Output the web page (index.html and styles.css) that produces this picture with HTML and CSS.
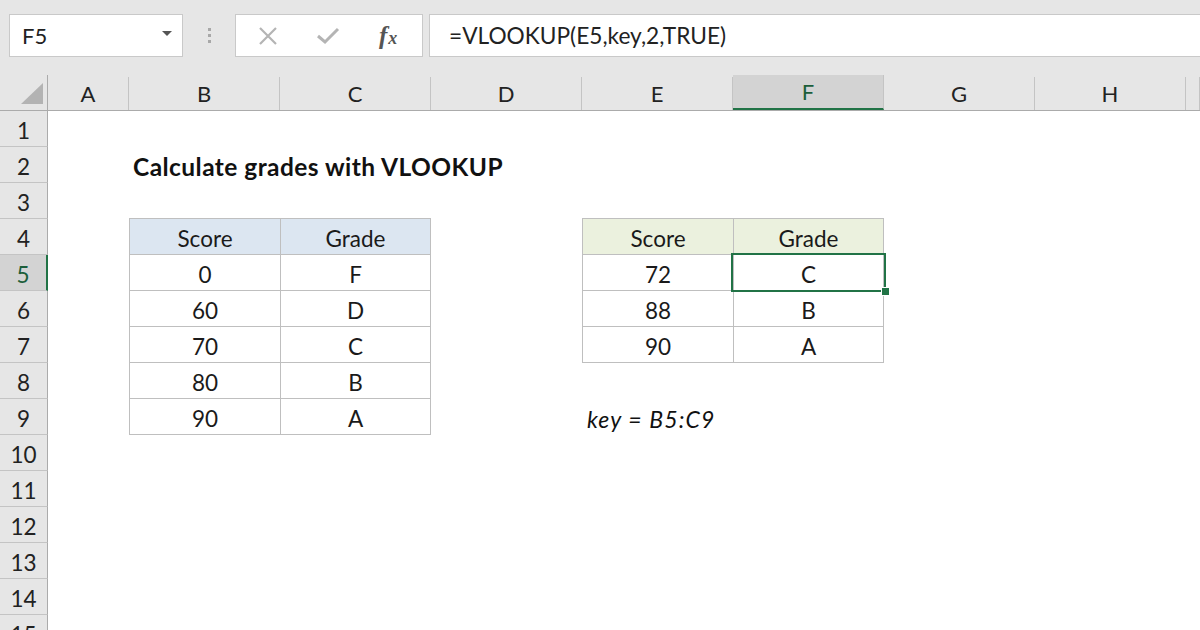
FILE: index.html
```html
<!DOCTYPE html>
<html>
<head>
<meta charset="utf-8">
<link rel="stylesheet" href="styles.css">
</head>
<body>
<div class="app">
  <div class="toolbar">
    <div class="namebox"><span class="name">F5</span><span class="caret"></span></div>
    <div class="grip"><i></i><i></i><i></i></div>
    <div class="btnbox">
      <svg class="ico-x" width="20" height="20" viewBox="0 0 20 20"><path d="M2 2 L18 18 M18 2 L2 18" stroke="#b4b4b4" stroke-width="2.2" fill="none"/></svg>
      <svg class="ico-check" width="24" height="18" viewBox="0 0 24 18"><path d="M2 9 L9 15 L22 2" stroke="#b4b4b4" stroke-width="3" fill="none"/></svg>
      <span class="fx"><span class="f">f</span><span class="x">x</span></span>
    </div>
    <div class="formula">=VLOOKUP(E5,key,2,TRUE)</div>
  </div>
  <div class="sheet">
    <div class="corner"><svg width="22" height="21" viewBox="0 0 22 21"><polygon points="22,0 22,21 0,21" fill="#b3b3b3"/></svg></div>
    <div class="colheads">
      <div class="ch">A</div>
      <div class="ch">B</div>
      <div class="ch">C</div>
      <div class="ch">D</div>
      <div class="ch">E</div>
      <div class="ch sel-h">F</div>
      <div class="ch">G</div>
      <div class="ch">H</div>
      <div class="ch"></div>
    </div>
    <div class="rowheads">
      <div class="rh">1</div>
      <div class="rh">2</div>
      <div class="rh">3</div>
      <div class="rh">4</div>
      <div class="rh sel-r">5</div>
      <div class="rh">6</div>
      <div class="rh">7</div>
      <div class="rh">8</div>
      <div class="rh">9</div>
      <div class="rh">10</div>
      <div class="rh">11</div>
      <div class="rh">12</div>
      <div class="rh">13</div>
      <div class="rh">14</div>
      <div class="rh">15</div>
    </div>
    <div class="cells">
      <div class="title">Calculate grades with VLOOKUP</div>
      <div class="tbl tbl-left">
        <div class="c hd">Score</div><div class="c hd">Grade</div>
        <div class="c">0</div><div class="c">F</div>
        <div class="c">60</div><div class="c">D</div>
        <div class="c">70</div><div class="c">C</div>
        <div class="c">80</div><div class="c">B</div>
        <div class="c">90</div><div class="c">A</div>
      </div>
      <div class="tbl tbl-right">
        <div class="c hd">Score</div><div class="c hd">Grade</div>
        <div class="c">72</div><div class="c">C</div>
        <div class="c">88</div><div class="c">B</div>
        <div class="c">90</div><div class="c">A</div>
      </div>
      <div class="selection"><span class="handle"></span></div>
      <div class="key">key = B5:C9</div>
    </div>
  </div>
</div>
</body>
</html>
```

FILE: styles.css
```css
html, body {
  margin: 0;
  padding: 0;
  width: 1200px;
  height: 630px;
  overflow: hidden;
  background: #ffffff;
}
body {
  font-family: Lato, "Open Sans", sans-serif;
  color: #1a1a1a;
}
.app {
  width: 1200px;
  height: 630px;
  overflow: hidden;
}
.toolbar {
  height: 75px;
  background: #e6e6e6;
  box-sizing: border-box;
  padding-top: 14px;
  display: flex;
  align-items: flex-start;
}
.namebox {
  margin-left: 9px;
  width: 174px;
  height: 43px;
  box-sizing: border-box;
  background: #fff;
  border: 1px solid #c9c9c9;
  display: flex;
  align-items: center;
  justify-content: space-between;
  padding: 0 10px 0 12px;
}
.name {
  font-size: 22px;
  color: #222;
}
.caret {
  width: 0;
  height: 0;
  border-left: 5px solid transparent;
  border-right: 5px solid transparent;
  border-top: 5px solid #555;
  margin-top: -4px;
}
.grip {
  width: 52px;
  height: 43px;
  display: flex;
  flex-direction: column;
  align-items: center;
  justify-content: center;
  gap: 3px;
}
.grip i {
  display: block;
  width: 3px;
  height: 3px;
  background: #a8a8a8;
}
.btnbox {
  width: 188px;
  height: 43px;
  box-sizing: border-box;
  background: #fff;
  border: 1px solid #c9c9c9;
  display: flex;
  align-items: center;
  padding-left: 22px;
}
.ico-x { margin-right: 38px; }
.ico-check { margin-right: 38px; }
.fx {
  font-family: "Liberation Serif", serif;
  font-style: italic;
  font-weight: bold;
  color: #555;
  display: flex;
  align-items: baseline;
  margin-left: 1px;
}
.fx .f { font-size: 25px; }
.fx .x { font-size: 18px; margin-left: 1px; }
.formula {
  margin-left: 6px;
  flex: 1;
  height: 43px;
  box-sizing: border-box;
  background: #fff;
  border: 1px solid #c9c9c9;
  border-right: none;
  display: flex;
  align-items: center;
  padding-left: 19px;
  font-size: 22.7px;
  color: #222;
}
.sheet {
  display: grid;
  grid-template-columns: 48px 1fr;
  grid-template-rows: 36px auto;
}
.corner {
  background: #e6e6e6;
  border-right: 1px solid #ababab;
  border-bottom: 1px solid #ababab;
  box-sizing: border-box;
  display: flex;
  align-items: flex-end;
  justify-content: flex-end;
  padding: 0 4px 6px 0;
}
.corner svg { display: block; }
.colheads {
  display: grid;
  grid-template-columns: 81px repeat(7, 151px) 1fr;
  background: #e6e6e6;
  border-bottom: 1px solid #ababab;
  box-sizing: border-box;
}
.ch {
  box-sizing: border-box;
  border-right: 1px solid #c4c4c4;
  margin-top: 2px;
  display: flex;
  align-items: center;
  justify-content: center;
  font-size: 22px;
  color: #222;
}
.ch.sel-h {
  background: #d3d3d3;
  margin-top: 0;
  border-bottom: 2px solid #217346;
  color: #1b5e3a;
}
.rowheads {
  display: flex;
  flex-direction: column;
}
.rh {
  height: 36px;
  flex: none;
  box-sizing: border-box;
  background: #e6e6e6;
  border-right: 1px solid #ababab;
  border-bottom: 1px solid #c4c4c4;
  display: flex;
  align-items: center;
  justify-content: center;
  padding-top: 3px;
  font-size: 22.5px;
  color: #222;
}
.rh.sel-r {
  background: #d3d3d3;
  border-right: 2px solid #217346;
  color: #1b5e3a;
}
.cells {
  display: grid;
  grid-template-columns: 81px repeat(7, 151px) 1fr;
  grid-template-rows: repeat(15, 36px);
  background: #fff;
}
.title {
  grid-column: 2 / span 3;
  grid-row: 2;
  font-weight: bold;
  font-size: 24.5px;
  letter-spacing: 0.45px;
  padding-left: 4px;
  padding-top: 3px;
  display: flex;
  align-items: center;
  white-space: nowrap;
  color: #111;
}
.tbl {
  display: grid;
  grid-template-columns: 151px 150px;
  grid-auto-rows: 36px;
  border-top: 1px solid #bfbfbf;
  border-left: 1px solid #bfbfbf;
  margin-top: -1px;
  align-self: start;
}
.tbl-left {
  grid-column: 2 / span 2;
  grid-row: 4 / span 6;
}
.tbl-right {
  grid-column: 5 / span 2;
  grid-row: 4 / span 4;
}
.tbl-left .hd { background: #dce6f1; }
.tbl-right .hd { background: #ebf1de; }
.c {
  box-sizing: border-box;
  border-right: 1px solid #bfbfbf;
  border-bottom: 1px solid #bfbfbf;
  display: flex;
  align-items: center;
  justify-content: center;
  padding-top: 3px;
  font-size: 22.5px;
  color: #1a1a1a;
}
.selection {
  grid-column: 6;
  grid-row: 5;
  position: relative;
  z-index: 2;
  border: 2px solid #217346;
  margin: -2px -2px -1px -2px;
}
.handle {
  position: absolute;
  right: -6px;
  bottom: -6px;
  width: 7px;
  height: 7px;
  background: #217346;
  border: 1px solid #fff;
}
.key {
  grid-column: 5 / span 2;
  grid-row: 9;
  font-style: italic;
  font-size: 23px;
  letter-spacing: 1.1px;
  padding-left: 5px;
  padding-top: 3px;
  display: flex;
  align-items: center;
  white-space: nowrap;
  color: #111;
}
```
